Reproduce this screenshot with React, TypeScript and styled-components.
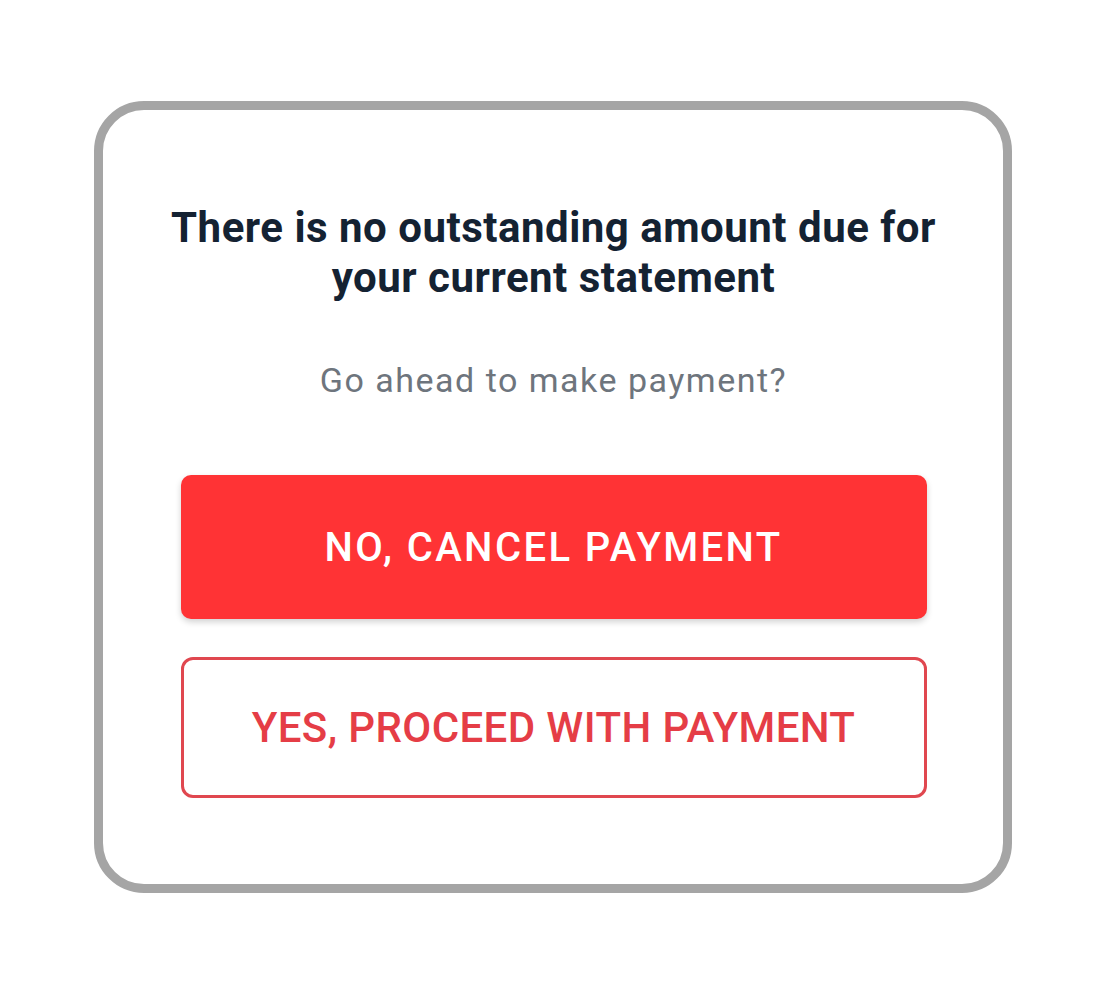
import styled, { createGlobalStyle } from 'styled-components';

const GlobalStyle = createGlobalStyle`
  html, body {
    margin: 0;
    padding: 0;
    background: #ffffff;
  }
  body {
    font-family: Roboto, "Noto Sans", Arial, sans-serif;
  }
`;

const Page = styled.div`
  width: 1105px;
  height: 994px;
  display: flex;
  justify-content: center;
  padding-top: 101px;
  box-sizing: border-box;
`;

const Card = styled.div`
  width: 918px;
  height: 792px;
  box-sizing: border-box;
  border: 9px solid #a5a5a5;
  border-radius: 50px;
  background: #fff;
  padding: 93px 76px 0 78px;
  display: flex;
  flex-direction: column;
  align-items: stretch;
`;

const Title = styled.h2`
  margin: 0 -30px;
  font-size: 42px;
  line-height: 50px;
  font-weight: 700;
  letter-spacing: 0.5px;
  color: #142232;
  text-align: center;
  white-space: nowrap;
`;

const Subtitle = styled.p`
  margin: 57px 0 0;
  font-size: 34px;
  line-height: 40px;
  font-weight: 400;
  letter-spacing: 1.5px;
  color: #6e757d;
  text-align: center;
`;

interface ButtonProps {
  variant: 'filled' | 'outline';
}

const ActionButton = styled.button<ButtonProps>`
  display: flex;
  align-items: center;
  justify-content: center;
  width: 100%;
  height: ${(props) => (props.variant === 'filled' ? '144px' : '141px')};
  margin-top: ${(props) => (props.variant === 'filled' ? '75px' : '38px')};
  box-sizing: border-box;
  border-radius: ${(props) => (props.variant === 'filled' ? '10px' : '12px')};
  border: ${(props) => (props.variant === 'filled' ? 'none' : '3px solid #e0474f')};
  background: ${(props) => (props.variant === 'filled' ? '#ff3335' : '#ffffff')};
  color: ${(props) => (props.variant === 'filled' ? '#ffffff' : '#e53d46')};
  box-shadow: ${(props) => (props.variant === 'filled' ? '0 3px 6px rgba(0,0,0,0.18)' : 'none')};
  font-family: Roboto, "Noto Sans", Arial, sans-serif;
  font-size: ${(props) => (props.variant === 'filled' ? '40px' : '42px')};
  font-weight: 500;
  letter-spacing: ${(props) => (props.variant === 'filled' ? '2.4px' : '0.4px')};
  text-transform: uppercase;
  padding: 0;
  cursor: pointer;
`;

export default function App() {
  return (
    <>
      <GlobalStyle />
      <Page>
        <Card>
          <Title>
            There is no outstanding amount due for
            <br />
            your current statement
          </Title>
          <Subtitle>Go ahead to make payment?</Subtitle>
          <ActionButton variant="filled">No, cancel payment</ActionButton>
          <ActionButton variant="outline">Yes, proceed with payment</ActionButton>
        </Card>
      </Page>
    </>
  );
}
